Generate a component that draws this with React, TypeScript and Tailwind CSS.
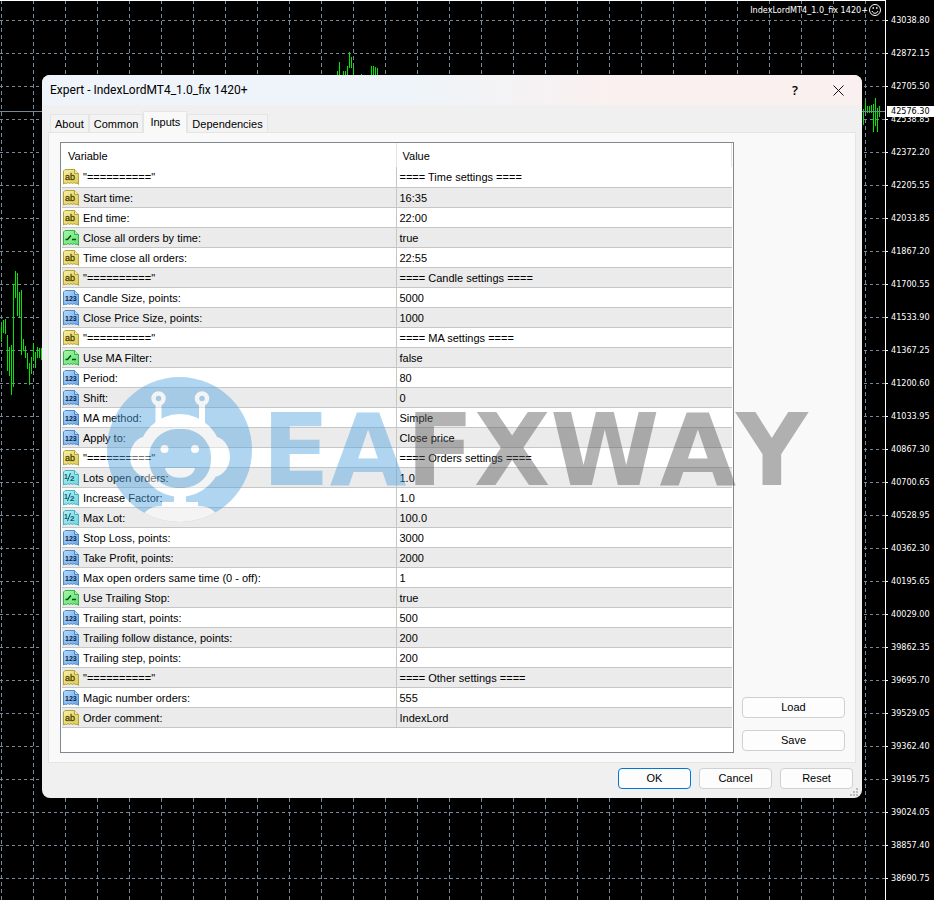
import { useState } from 'react';

type ParamKind = 'string' | 'bool' | 'int' | 'double';

interface Param {
  kind: ParamKind;
  name: string;
  value: string;
}

const DIVIDER = '"=========="';

const PARAMS: Param[] = [
  { kind: 'string', name: DIVIDER, value: '==== Time settings ====' },
  { kind: 'string', name: 'Start time:', value: '16:35' },
  { kind: 'string', name: 'End time:', value: '22:00' },
  { kind: 'bool', name: 'Close all orders by time:', value: 'true' },
  { kind: 'string', name: 'Time close all orders:', value: '22:55' },
  { kind: 'string', name: DIVIDER, value: '==== Candle settings ====' },
  { kind: 'int', name: 'Candle Size, points:', value: '5000' },
  { kind: 'int', name: 'Close Price Size, points:', value: '1000' },
  { kind: 'string', name: DIVIDER, value: '==== MA settings ====' },
  { kind: 'bool', name: 'Use MA Filter:', value: 'false' },
  { kind: 'int', name: 'Period:', value: '80' },
  { kind: 'int', name: 'Shift:', value: '0' },
  { kind: 'int', name: 'MA method:', value: 'Simple' },
  { kind: 'int', name: 'Apply to:', value: 'Close price' },
  { kind: 'string', name: DIVIDER, value: '==== Orders settings ====' },
  { kind: 'double', name: 'Lots open orders:', value: '1.0' },
  { kind: 'double', name: 'Increase Factor:', value: '1.0' },
  { kind: 'double', name: 'Max Lot:', value: '100.0' },
  { kind: 'int', name: 'Stop Loss, points:', value: '3000' },
  { kind: 'int', name: 'Take Profit, points:', value: '2000' },
  { kind: 'int', name: 'Max open orders same time (0 - off):', value: '1' },
  { kind: 'bool', name: 'Use Trailing Stop:', value: 'true' },
  { kind: 'int', name: 'Trailing start, points:', value: '500' },
  { kind: 'int', name: 'Trailing follow distance, points:', value: '200' },
  { kind: 'int', name: 'Trailing step, points:', value: '200' },
  { kind: 'string', name: DIVIDER, value: '==== Other settings ====' },
  { kind: 'int', name: 'Magic number orders:', value: '555' },
  { kind: 'string', name: 'Order comment:', value: 'IndexLord' },
];

const PRICES = [
  '43038.80', '42872.15', '42705.50', '42538.85', '42372.20', '42205.55', '42033.85',
  '41867.20', '41700.55', '41533.90', '41367.25', '41200.60', '41033.95', '40867.30',
  '40700.65', '40528.95', '40362.30', '40195.65', '40029.00', '39862.35', '39695.70',
  '39529.05', '39362.40', '39195.75', '39024.05', '38857.40', '38690.75',
];

// [x, high, low]
const BARS: [number, number, number][] = [
  [1, 326, 342], [3, 320, 333], [5, 319, 334], [7, 335, 371], [9, 347, 376], [11, 345, 395],
  [13, 284, 387], [15, 271, 298], [17, 273, 316], [19, 292, 317], [21, 290, 355], [23, 339, 351],
  [25, 346, 358], [27, 353, 369], [29, 363, 385], [31, 357, 374], [33, 343, 360], [35, 352, 368],
  [37, 347, 358], [39, 348, 358], [41, 348, 360],
  [337, 71, 76], [339, 62, 76], [343, 71, 76], [345, 71, 76], [347, 66, 76], [349, 52, 68],
  [351, 57, 68], [353, 66, 76], [361, 74, 76], [371, 66, 76], [373, 66, 76], [375, 67, 76],
  [377, 68, 76],
  [863, 109, 125], [865, 101, 112], [867, 106, 113], [869, 106, 113], [871, 105, 113],
  [873, 104, 132], [875, 98, 126], [877, 108, 132], [879, 106, 117],
];

const TABS = ['About', 'Common', 'Inputs', 'Dependencies'];

export default function App() {
  return (
    <div className="grid min-h-screen bg-black font-['Liberation_Sans',sans-serif] text-[11px] leading-[14px] text-black">
      <div className="col-start-1 row-start-1 flex">
        <Chart />
        <PriceAxis />
      </div>
      <div className="relative col-start-1 row-start-1 mt-[75px] mr-[72px] ml-[42px] self-start">
        <ExpertDialog />
        <Watermark />
      </div>
    </div>
  );
}

function Chart() {
  return (
    <div className="relative min-w-0 flex-1 border-t border-white">
      <svg className="absolute inset-x-0 -top-px h-[calc(100%+1px)] w-full" shapeRendering="crispEdges">
        <defs>
          <pattern id="grid-v" x="1" y="0" width="32" height="7" patternUnits="userSpaceOnUse">
            <rect width="1" height="4" fill="#778899" />
          </pattern>
          <pattern id="grid-h" x="0" y="20" width="6" height="33" patternUnits="userSpaceOnUse">
            <rect width="3" height="1" fill="#778899" />
          </pattern>
        </defs>
        <rect y="1" width="100%" height="100%" fill="url(#grid-v)" />
        <rect y="1" width="100%" height="100%" fill="url(#grid-h)" />
        {BARS.map(([x, high, low]) => (
          <rect key={x} x={x} y={high} width="1" height={low - high} fill="#00e800" />
        ))}
        <rect y="111" width="100%" height="1" fill="#778899" />
      </svg>
      <div className="relative flex items-center justify-end gap-px pt-[3px] pr-1 font-['DejaVu_Sans_Condensed','DejaVu_Sans',sans-serif] text-[9px] leading-3 text-white">
        <span>IndexLordMT4_1.0_fix 1420+</span>
        <SmileIcon />
      </div>
    </div>
  );
}

function PriceAxis() {
  return (
    <div className="relative w-[49px] border-l border-white pt-1 font-['DejaVu_Sans_Condensed','DejaVu_Sans',sans-serif] text-[9px] leading-[11px] text-white">
      {PRICES.map((price) => (
        <div key={price} className="flex h-[33px] items-center gap-[3px]">
          <span className="h-px w-[2px] bg-white" />
          {price}
        </div>
      ))}
      {/* Current bid */}
      <div className="absolute top-[106px] right-0 left-px bg-white pl-1 text-black">42576.30</div>
    </div>
  );
}

function ExpertDialog() {
  const [activeTab, setActiveTab] = useState('Inputs');

  return (
    <div role="dialog" aria-label="Expert" className="relative overflow-hidden rounded-lg bg-[#f0f0f0]">
      {/* Title bar */}
      <div className="flex h-[30px] items-center bg-linear-to-r from-[#eef4f9] from-45% to-[#faf0ef] to-70% pr-4 pl-2">
        <h1 className="flex-1 font-[Roboto,sans-serif] text-[12px]">Expert - IndexLordMT4_1.0_fix 1420+</h1>
        <button aria-label="Help" className="w-6 font-['Open_Sans',sans-serif] text-[13px] font-semibold">
          ?
        </button>
        <button aria-label="Close" className="ml-6 flex w-[15px] justify-center">
          <svg className="h-[11px] w-[11px]" viewBox="0 0 11 11" fill="none" stroke="#111">
            <path d="M.5.5l10 10M10.500.5l-10 10" />
          </svg>
        </button>
      </div>

      {/* Tabs */}
      <div role="tablist" className="flex h-[27px] items-end px-2">
        {TABS.map((tab) => (
          <button
            key={tab}
            role="tab"
            aria-selected={tab === activeTab}
            onClick={() => setActiveTab(tab)}
            className={
              tab === activeTab
                ? 'z-10 -mb-px h-[22px] border border-b-0 border-[#e5e5e5] bg-[#f9f9f9] px-[6px] pb-[2px]'
                : 'h-[18px] border border-b-0 border-[#e5e5e5] bg-[#f3f3f3] px-1'
            }
          >
            {tab}
          </button>
        ))}
      </div>

      {/* Inputs page */}
      <div className="mx-[6px] flex gap-2 border border-[#e5e5e5] bg-[#f9f9f9] py-[9px] pr-[10px] pl-[11px]">
        <div className="min-w-0 flex-1 border border-[#828790] bg-white px-px pb-6">
          <ParamTable />
        </div>
        <div className="flex w-[103px] flex-col justify-end gap-3 pb-[2px]">
          <DialogButton label="Load" />
          <DialogButton label="Save" />
        </div>
      </div>

      {/* Footer */}
      <div className="flex justify-end gap-2 pt-[5px] pr-[9px] pb-[9px]">
        <div className="flex w-[73px] flex-col">
          <DialogButton label="OK" primary />
        </div>
        <div className="flex w-[73px] flex-col">
          <DialogButton label="Cancel" />
        </div>
        <div className="flex w-[73px] flex-col">
          <DialogButton label="Reset" />
        </div>
      </div>
      <svg className="absolute right-1 bottom-[2px] h-2 w-2" viewBox="0 0 8 8" fill="#bdbdbd">
        <path d="M6 0h2v2H6zM3 3h2v2H3zM6 3h2v2H6zM0 6h2v2H0zM3 6h2v2H3zM6 6h2v2H6z" />
      </svg>
    </div>
  );
}

function ParamTable() {
  return (
    <table className="w-full table-fixed border-collapse text-left">
      <thead>
        <tr className="h-6">
          <th className="w-[334px] border-r border-[#e5e5e5] pt-[2px] pl-[6px] font-normal">Variable</th>
          <th className="border-r border-[#e5e5e5] pt-[2px] pl-[6px] font-normal">Value</th>
        </tr>
      </thead>
      <tbody>
        {PARAMS.map((param, i) => (
          <tr key={i} className="h-5 border-b border-[#c6c6c6] even:bg-[#ebebeb]">
            <td className="border-r border-[#c6c6c6] p-0 pt-px">
              <div className="flex items-center gap-1 pl-px">
                <ParamIcon kind={param.kind} />
                {param.name}
              </div>
            </td>
            <td className="p-0 pt-px pl-[3px]">{param.value}</td>
          </tr>
        ))}
      </tbody>
    </table>
  );
}

function DialogButton({ label, primary }: { label: string; primary?: boolean }) {
  return (
    <button
      className={
        primary
          ? 'h-[21px] rounded border border-[#0078d4] bg-[#fdfdfd]'
          : 'h-[21px] rounded border border-[#d0d0d0] bg-[#fdfdfd]'
      }
    >
      {label}
    </button>
  );
}

const ICON_COLORS: Record<ParamKind, { from: string; to: string; edge: string; ink: string }> = {
  string: { from: '#f6efa8', to: '#dccb4e', edge: '#b5a23c', ink: '#4d4200' },
  bool: { from: '#a5f7a8', to: '#5fe070', edge: '#3bb04c', ink: '#064d12' },
  int: { from: '#b5d9fa', to: '#6aa5e2', edge: '#4f8ac8', ink: '#06254d' },
  double: { from: '#b5f0f5', to: '#6fd3df', edge: '#47b3c2', ink: '#0b5a66' },
};

function ParamIcon({ kind }: { kind: ParamKind }) {
  const { from, to, edge, ink } = ICON_COLORS[kind];
  return (
    <svg className="h-4 w-4 shrink-0" viewBox="0 0 16 16">
      <defs>
        <linearGradient id={`fill-${kind}`} x1="0" y1="0" x2="1" y2="1">
          <stop offset="0" stopColor={from} />
          <stop offset="1" stopColor={to} />
        </linearGradient>
      </defs>
      <path
        d="M2 .5h9.500l4 4v11l-1.500-1.500-1.500.5-1.500-1-1.500 1-1.500-1-1.500 1-1.500-1L3.500 14.500 2 14l-1.500 1V2z"
        fill={`url(#fill-${kind})`}
        stroke={edge}
      />
      <path d="M11.500.5v4h4" fill={from} stroke={edge} />
      {kind === 'bool' && <path d="M2.500 9.500h2l3.500-4M9 9.500h4" fill="none" stroke={ink} strokeWidth="1.500" />}
      {kind === 'string' && (
        <text x="2" y="11" fontSize="9" fill={ink} stroke={ink} strokeWidth=".3">
          ab
        </text>
      )}
      {kind === 'int' && (
        <text x="2" y="11" fontSize="7" fontWeight="bold" fill={ink}>
          123
        </text>
      )}
      {kind === 'double' && (
        <>
          <text x="1" y="9" fontSize="7" fontWeight="bold" fill={ink}>
            1
          </text>
          <path d="M7.500 3l-3 8" stroke={ink} />
          <text x="7" y="11" fontSize="8" fontWeight="bold" fill={ink}>
            2
          </text>
        </>
      )}
    </svg>
  );
}

function SmileIcon() {
  return (
    <svg className="h-3 w-3" viewBox="0 0 12 12" fill="none" stroke="#fff">
      <circle cx="6" cy="6" r="5.500" />
      <path d="M3 7c1 3 5 3 6 0" />
      <path d="M3.500 4h1.500M7 4h1.500" strokeWidth="1.500" />
    </svg>
  );
}

function Watermark() {
  return (
    <div className="pointer-events-none absolute top-[302px] left-[65px] flex items-center gap-[10px] opacity-45">
      <svg className="h-[145px] w-[145px] shrink-0" viewBox="0 0 145 145">
        <clipPath id="badge">
          <circle cx="72.500" cy="72.500" r="72.500" />
        </clipPath>
        <g clipPath="url(#badge)">
          <rect width="145" height="145" fill="#4fa4e0" />
          {/* Antennas */}
          <g fill="none" stroke="#fff">
            <circle cx="51.500" cy="21.500" r="5" strokeWidth="4.500" />
            <circle cx="95" cy="21.500" r="5" strokeWidth="4.500" />
            <path d="M51.500 27v24M95 27v24" strokeWidth="6" />
          </g>
          {/* Head and ears */}
          <g fill="#fff">
            <circle cx="73" cy="78.500" r="41.500" />
            <path d="M36 60c-8 2-13 11-13 20s6 19 16 20zM110 60c8 2 13 11 13 20s-6 19-16 20z" />
            <path d="M67 117h12v8h12v4q15 0 20 11v5H35v-5q5-11 20-11v-4h12z" />
          </g>
          {/* Face */}
          <rect x="42" y="52" width="62" height="59" rx="28" fill="#4fa4e0" />
          <g fill="#fff">
            <circle cx="57.500" cy="72" r="4" />
            <circle cx="88" cy="72" r="4" />
            <path d="M58 91h30c-2 13-28 13-30 0z" />
          </g>
        </g>
      </svg>
      <div className="pt-[2px] font-['DejaVu_Sans',sans-serif] text-[99px] leading-none font-bold [font-kerning:none]">
        <span className="text-[#4fa4e0]">EA</span>
        <span className="text-[#585858]">FXWAY</span>
      </div>
    </div>
  );
}
